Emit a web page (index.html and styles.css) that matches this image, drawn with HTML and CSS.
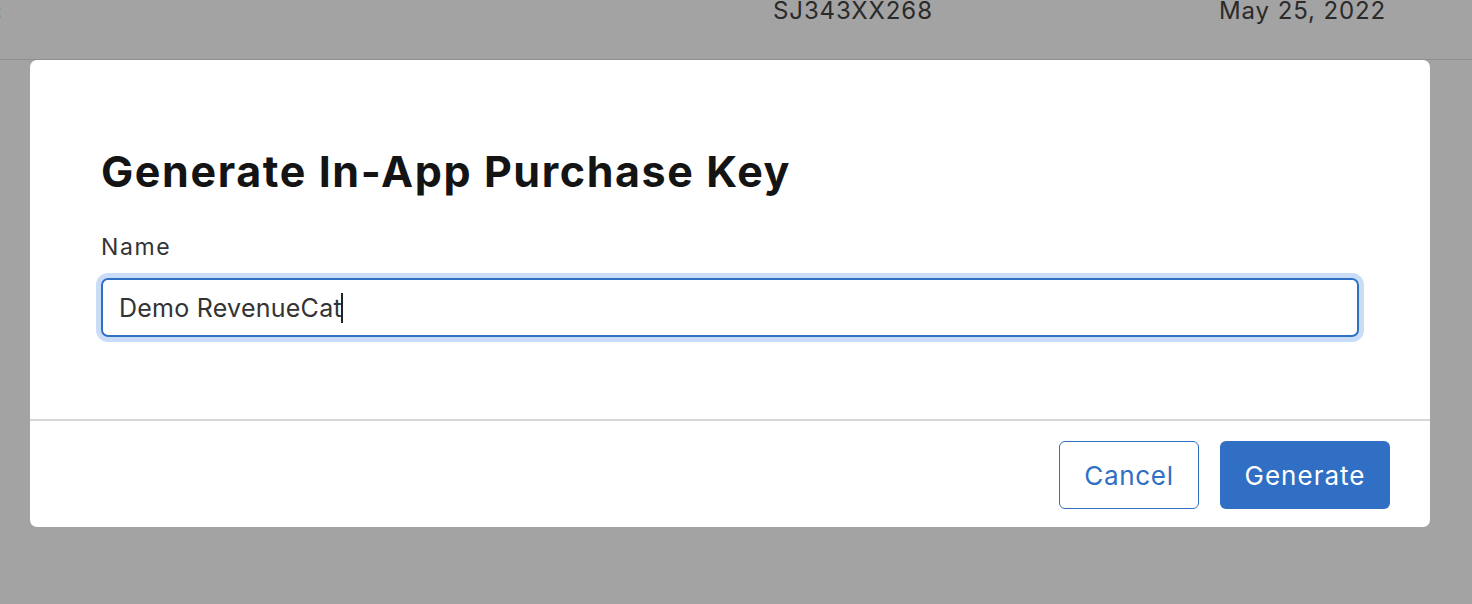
FILE: index.html
```html
<!DOCTYPE html>
<html>
<head>
<meta charset="utf-8">
<link rel="stylesheet" href="styles.css">
</head>
<body>
<div class="page">
  <div class="table-row">
    <span class="cell cell-cut">:</span>
    <span class="cell cell-id">SJ343XX268</span>
    <span class="cell cell-date">May 25, 2022</span>
  </div>
  <div class="overlay">
    <div class="modal">
      <div class="modal-body">
        <h1 class="title">Generate In-App Purchase Key</h1>
        <label class="label">Name</label>
        <div class="input"><span class="input-text">Demo RevenueCat</span><span class="caret"></span></div>
      </div>
      <div class="modal-footer">
        <button class="btn btn-secondary">Cancel</button>
        <button class="btn btn-primary">Generate</button>
      </div>
    </div>
  </div>
</div>
</body>
</html>
```
FILE: styles.css
```css
html, body {
  margin: 0;
  padding: 0;
  background: #a3a3a3;
  font-family: Inter, "Noto Sans", sans-serif;
}
.page {
  width: 1472px;
  height: 604px;
  overflow: hidden;
}
.table-row {
  display: flex;
  align-items: flex-start;
  color: #2a2a2a;
  font-size: 24px;
  line-height: 29px;
  letter-spacing: 0.9px;
  box-sizing: border-box;
  height: 60px;
  border-bottom: 1px solid #8f8f8f;
}
.cell {
  display: block;
  margin-top: -4px;
}
.cell-cut {
  width: 778px;
  margin-left: -5px;
  font-size: 20px;
  font-weight: 700;
  margin-top: -3px;
}
.cell-id {
  width: 446px;
}
.overlay {
  padding: 0 42px 0 30px;
}
.modal {
  background: #fff;
  border-radius: 7px;
  height: 467px;
  display: flex;
  flex-direction: column;
}
.modal-body {
  padding: 85px 71px 0 71px;
  height: 361px;
  box-sizing: border-box;
  border-bottom: 2px solid #d6d6d6;
}
.title {
  margin: 0;
  font-size: 43px;
  font-weight: 700;
  color: #141414;
  line-height: 52px;
  letter-spacing: 1.6px;
}
.label {
  display: block;
  margin-top: 37px;
  font-size: 23px;
  color: #333;
  line-height: 26px;
  letter-spacing: 1.6px;
}
.input {
  margin-top: 18px;
  height: 59px;
  box-sizing: border-box;
  border: 2px solid #2f6fc4;
  border-radius: 7px;
  box-shadow: 0 0 0 5px #c9ddf8;
  display: flex;
  align-items: center;
  padding-left: 16px;
  font-size: 25px;
  letter-spacing: 0.25px;
  color: #333;
}
.caret {
  width: 2px;
  height: 30px;
  background: #222;
  margin-left: -1px;
}
.modal-footer {
  display: flex;
  justify-content: flex-end;
  gap: 21px;
  padding: 20px 40px 0 0;
}
.btn {
  font-family: Inter, "Noto Sans", sans-serif;
  height: 68px;
  border-radius: 6px;
  font-size: 26px;
  cursor: pointer;
  padding: 0;
}
.btn-secondary {
  width: 140px;
  background: #fff;
  border: 1.5px solid #2f6fc4;
  color: #2f6fc4;
  letter-spacing: 0.7px;
}
.btn-primary {
  width: 170px;
  background: #316fc4;
  border: none;
  color: #fff;
  letter-spacing: 1px;
}
```
